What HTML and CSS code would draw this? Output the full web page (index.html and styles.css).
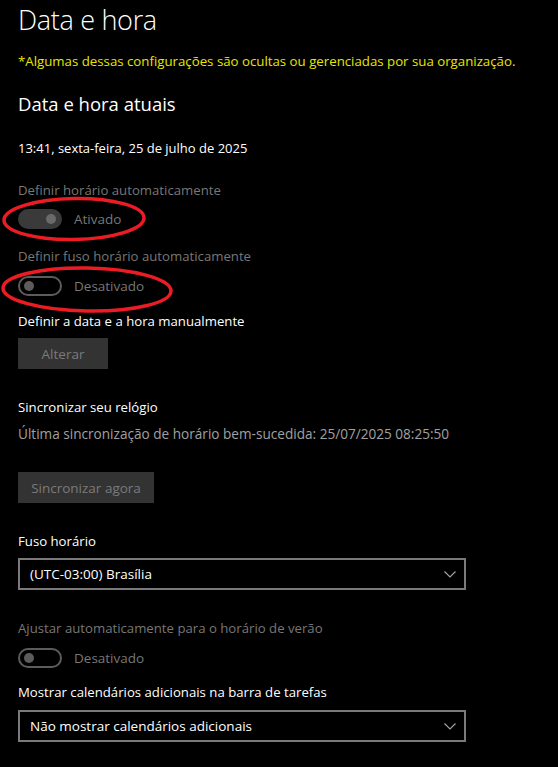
FILE: index.html
```html
<!DOCTYPE html>
<html lang="pt-BR">
  <head>
    <meta charset="UTF-8" />
    <meta name="viewport" content="width=device-width, initial-scale=1.0" />
    <title>Data e hora</title>
    <link rel="stylesheet" href="styles.css">
  </head>

  <body>
    <main class="page">
      <h1 class="title">Data e hora</h1>
      <p class="notice">*Algumas dessas configurações são ocultas ou gerenciadas por sua organização.</p>

      <h2 class="subtitle">Data e hora atuais</h2>
      <p class="now">13:41, sexta-feira, 25 de julho de 2025</p>

      <p class="label disabled label-auto">Definir horário automaticamente</p>
      <div class="toggle-row row-auto">
        <span class="toggle on"><span class="knob"></span></span>
        <span class="toggle-text">Ativado</span>
      </div>

      <p class="label disabled label-zone">Definir fuso horário automaticamente</p>
      <div class="toggle-row row-zone">
        <span class="toggle"><span class="knob"></span></span>
        <span class="toggle-text">Desativado</span>
      </div>

      <p class="label label-manual">Definir a data e a hora manualmente</p>
      <button class="btn btn-change">Alterar</button>

      <p class="label label-sync">Sincronizar seu relógio</p>
      <p class="sync-info">Última sincronização de horário bem-sucedida: 25/07/2025 08:25:50</p>
      <button class="btn btn-sync">Sincronizar agora</button>

      <p class="label label-tz">Fuso horário</p>
      <div class="select select-tz">
        <span>(UTC-03:00) Brasília</span>
        <svg class="chevron" width="12" height="7" viewBox="0 0 12 7"><path d="M0.5 0.5 L6 6 L11.5 0.5" fill="none" stroke="#a0a0a0" stroke-width="1.2"/></svg>
      </div>

      <p class="label disabled label-dst">Ajustar automaticamente para o horário de verão</p>
      <div class="toggle-row row-dst">
        <span class="toggle"><span class="knob"></span></span>
        <span class="toggle-text">Desativado</span>
      </div>

      <p class="label label-cal">Mostrar calendários adicionais na barra de tarefas</p>
      <div class="select select-cal">
        <span>Não mostrar calendários adicionais</span>
        <svg class="chevron" width="12" height="7" viewBox="0 0 12 7"><path d="M0.5 0.5 L6 6 L11.5 0.5" fill="none" stroke="#a0a0a0" stroke-width="1.2"/></svg>
      </div>

      <!-- red marks drawn over the screenshot -->
      <svg class="marks" width="558" height="767" viewBox="0 0 558 767">
        <ellipse cx="74" cy="219" rx="70" ry="20.5" fill="none" stroke="#ed1c24" stroke-width="3.5" transform="rotate(-1 74 219)"/>
        <ellipse cx="87" cy="289.5" rx="84" ry="21.5" fill="none" stroke="#ed1c24" stroke-width="3.5" transform="rotate(1 87 289)"/>
      </svg>
    </main>
  </body>
</html>
```

FILE: styles.css
```css
* {
  padding: 0;
  margin: 0;
  box-sizing: border-box;
}

body {
  background: #000;
  color: #fff;
  font-family: "Open Sans", "Noto Sans", sans-serif;
  font-size: 14px;
}

.page {
  position: relative;
  width: 558px;
  height: 767px;
  padding-left: 18px;
  overflow: hidden;
}

.title {
  font-size: 27px;
  font-weight: 300;
  line-height: 40px;
  letter-spacing: -0.3px;
}

.notice {
  margin-top: 11px;
  line-height: 20px;
  color: #e6e600;
  font-size: 13.25px;
}

.subtitle {
  margin-top: 19px;
  font-size: 18.5px;
  font-weight: 400;
  line-height: 28px;
}

.now {
  margin-top: 20px;
  line-height: 20px;
  font-size: 13px;
}

.label {
  line-height: 20px;
  font-size: 13.2px;
}

.disabled {
  color: #777;
}

.label-auto { margin-top: 22px; }
.label-zone { margin-top: 17px; }
.label-manual { margin-top: 15px; }
.label-sync { margin-top: 28px; }
.label-tz { margin-top: 28px; }
.label-dst { margin-top: 28px; }
.label-cal { margin-top: 14px; }

.toggle-row {
  display: flex;
  align-items: center;
  column-gap: 12px;
  height: 20px;
}

.row-auto { margin-top: 9px; }
.row-zone { margin-top: 10px; }
.row-dst { margin-top: 10px; }

.toggle {
  display: flex;
  align-items: center;
  width: 44px;
  height: 20px;
  padding: 0 4px;
  border: 2px solid #5c5c5c;
  border-radius: 10px;
}

.toggle .knob {
  width: 10px;
  height: 10px;
  border-radius: 50%;
  background: #5c5c5c;
}

.toggle.on {
  justify-content: flex-end;
  background: #3a3a3a;
  border-color: #3a3a3a;
}

.toggle.on .knob {
  background: #6a6a6a;
}

.toggle-text {
  color: #777;
  font-size: 13.5px;
}

.btn {
  display: block;
  height: 31px;
  border: none;
  background: #333;
  color: #7a7a7a;
  font-family: inherit;
  font-size: 13.5px;
}

.btn-change {
  margin-top: 7px;
  width: 90px;
}

.btn-sync {
  margin-top: 28px;
  width: 136px;
}

.sync-info {
  margin-top: 7px;
  line-height: 20px;
  color: #a0a0a0;
  font-size: 13.6px;
}

.select {
  display: flex;
  align-items: center;
  justify-content: space-between;
  width: 448px;
  height: 32px;
  padding: 0 8px 0 10px;
  border: 2px solid #7a7a7a;
  font-size: 13.5px;
}

.select-tz { margin-top: 7px; }
.select-cal { margin-top: 8px; }

.marks {
  position: absolute;
  left: 0;
  top: 0;
  pointer-events: none;
}
```
